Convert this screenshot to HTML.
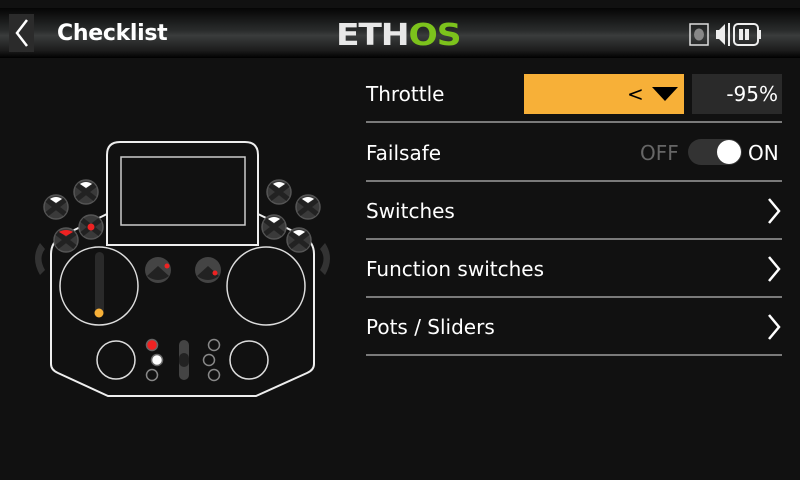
<!DOCTYPE html>
<html><head><style>
body{margin:0;width:800px;height:480px;background:#111;overflow:hidden;font-family:"DejaVu Sans","Liberation Sans",sans-serif;position:relative}
.hdr{position:absolute;left:0;top:8px;width:800px;height:50px;background:linear-gradient(#050505,#2a2c2c 45%,#3a3c3c 55%,#1c1c1c 85%,#000)}
.back{position:absolute;left:9px;top:14px;width:25px;height:38px;background:#2b2b2b}
.title{position:absolute;left:57px;top:21px;color:#fff;font:bold 22px "DejaVu Sans",sans-serif;letter-spacing:-0.3px}
.logo{position:absolute;left:336px;top:18px;font:bold 30px "DejaVu Sans",sans-serif;color:#e8e8e8;letter-spacing:-1px;transform:scaleX(1.15);transform-origin:left}
.logo span{color:#7cc21c}
.lbl{position:absolute;left:366px;color:#fff;font-size:20px}
.line{position:absolute;left:366px;width:416px;height:2px;background:#7a7a7a}
</style></head><body>
<div class="hdr"></div>
<div class="back"></div>
<svg style="position:absolute;left:9px;top:14px" width="25" height="38"><path d="M18 6 L8 19 L18 32" stroke="#fff" stroke-width="2.5" fill="none"/></svg>
<div class="title">Checklist</div>
<div class="logo">ETH<span>OS</span></div>
<svg style="position:absolute;left:688px;top:20px" width="100" height="28">
<rect x="2" y="4" width="18" height="21" fill="none" stroke="#ddd" stroke-width="1.5"/><ellipse cx="11" cy="14.5" rx="5" ry="6" fill="#888"/>
<path d="M31 10 L37 4 L37 25 L31 19 Z M28 10 h4 v9 h-4z" fill="#eee"/><rect x="40" y="3" width="2" height="23" fill="#eee"/>
<rect x="46" y="4" width="24" height="21" rx="4" fill="none" stroke="#eee" stroke-width="2"/><rect x="70" y="10" width="3" height="9" fill="#eee"/>
<rect x="51" y="9" width="4" height="11" fill="#eee"/><rect x="57" y="9" width="4" height="11" fill="#eee"/>
</svg>

<div class="lbl" style="top:82px">Throttle</div>
<div style="position:absolute;left:524px;top:74px;width:160px;height:40px;background:#f7b038"></div>
<div style="position:absolute;left:627px;top:82px;font-size:20px;color:#000">&lt;</div>
<svg style="position:absolute;left:651px;top:86px" width="28" height="16"><path d="M1 1 H27 L14 15Z" fill="#000"/></svg>
<div style="position:absolute;left:692px;top:74px;width:90px;height:40px;background:#2a2a2a"></div>
<div style="position:absolute;left:692px;top:82px;width:86px;text-align:right;color:#fff;font-size:20px">-95%</div>
<div class="line" style="top:121px"></div>
<div class="lbl" style="top:141px">Failsafe</div>
<div style="position:absolute;left:640px;top:141px;color:#666;font-size:20px">OFF</div>
<div style="position:absolute;left:688px;top:139px;width:54px;height:26px;border-radius:13px;background:#333"></div>
<div style="position:absolute;left:717px;top:140px;width:24px;height:24px;border-radius:12px;background:#fff"></div>
<div style="position:absolute;left:748px;top:141px;color:#fff;font-size:20px">ON</div>
<div class="line" style="top:180px"></div>
<div class="lbl" style="top:199px">Switches</div>
<div class="line" style="top:238px"></div>
<div class="lbl" style="top:257px">Function switches</div>
<div class="line" style="top:296px"></div>
<div class="lbl" style="top:315px">Pots / Sliders</div>
<div class="line" style="top:354px"></div>
<svg style="position:absolute;left:764px;top:196px" width="20" height="150" fill="none" stroke="#fff" stroke-width="2.5">
<path d="M5 3 L15 15 L5 27"/><path d="M5 61 L15 73 L5 85"/><path d="M5 119 L15 131 L5 143"/></svg>

<svg style="position:absolute;left:0;top:0" width="360" height="480">
<g fill="none" stroke="#eee" stroke-width="2">
<path d="M107 214 L62 236 Q51 242 51 254 L51 364 Q51 370 58 373 L108 396 L256 396 L307 373 Q314 370 314 364 L314 254 Q314 242 303 236 L258 214"/>
<path d="M107 245 V155 Q107 142 120 142 H245 Q258 142 258 155 V245 Z"/>
</g>
<rect x="121" y="157" width="124" height="68" fill="none" stroke="#ccc" stroke-width="1.5"/>
<g fill="none" stroke="#ddd" stroke-width="1.5">
<circle cx="99" cy="286" r="39"/><circle cx="266" cy="286" r="39"/>
<circle cx="116" cy="360" r="19"/><circle cx="249" cy="360" r="19"/></g>
<rect x="95" y="252" width="9" height="62" rx="4.5" fill="#2a2a2a"/><circle cx="99" cy="313" r="4.5" fill="#f7b038"/>
<g fill="#444"><circle cx="158" cy="270" r="13"/><circle cx="208" cy="270" r="13"/></g>
<g fill="#222"><path d="M147 276 L158 266 L169 276 Q158 284 147 276Z"/><path d="M197 276 L208 266 L219 276 Q208 284 197 276Z"/></g>
<circle cx="167" cy="266" r="2.5" fill="#e22"/><circle cx="215" cy="273" r="2.5" fill="#e22"/>
<g stroke="#555" stroke-width="1.5" fill="#3a3a3a">
<circle cx="56" cy="207" r="12"/><circle cx="86" cy="192" r="12"/><circle cx="91" cy="227" r="12"/><circle cx="66" cy="240" r="12"/>
<circle cx="279" cy="192" r="12"/><circle cx="308" cy="207" r="12"/><circle cx="274" cy="227" r="12"/><circle cx="299" cy="240" r="12"/></g>
<g fill="#222">
<path d="M47 200 L65 214 M65 200 L47 214" stroke="#222" stroke-width="5"/>
<path d="M77 185 L95 199 M95 185 L77 199" stroke="#222" stroke-width="5"/>
<path d="M82 220 L100 234 M100 220 L82 234" stroke="#222" stroke-width="5"/>
<path d="M57 233 L75 247 M75 233 L57 247" stroke="#222" stroke-width="5"/>
<path d="M270 185 L288 199 M288 185 L270 199" stroke="#222" stroke-width="5"/>
<path d="M299 200 L317 214 M317 200 L299 214" stroke="#222" stroke-width="5"/>
<path d="M265 220 L283 234 M283 220 L265 234" stroke="#222" stroke-width="5"/>
<path d="M290 233 L308 247 M308 233 L290 247" stroke="#222" stroke-width="5"/>
</g>
<g fill="#fff"><path d="M50 199 Q56 195 62 199 L56 203Z"/><path d="M80 184 Q86 180 92 184 L86 188Z"/><path d="M273 184 Q279 180 285 184 L279 188Z"/><path d="M302 199 Q308 195 314 199 L308 203Z"/><path d="M268 219 Q274 215 280 219 L274 223Z"/><path d="M293 232 Q299 228 305 232 L299 236Z"/></g>
<path d="M59 232 Q66 228 73 232 L66 236Z" fill="#e22"/><circle cx="91" cy="227" r="3.5" fill="#e22"/>
<g fill="#333"><path d="M40 243 Q30 258 40 275 L45 270 Q38 258 45 249Z"/><path d="M325 243 Q335 258 325 275 L320 270 Q327 258 320 249Z"/></g>
<rect x="179" y="340" width="10" height="40" rx="5" fill="#444"/><rect x="179" y="353" width="10" height="14" rx="5" fill="#222"/>
<circle cx="152" cy="345" r="5.5" fill="#e22" stroke="#666" stroke-width="1.5"/>
<circle cx="157" cy="360" r="5.5" fill="#fff" stroke="#666" stroke-width="1.5"/>
<g fill="none" stroke="#888" stroke-width="1.5"><circle cx="152" cy="375" r="5.5"/><circle cx="214" cy="345" r="5.5"/><circle cx="209" cy="360" r="5.5"/><circle cx="214" cy="375" r="5.5"/></g>
</svg>
</body></html>
